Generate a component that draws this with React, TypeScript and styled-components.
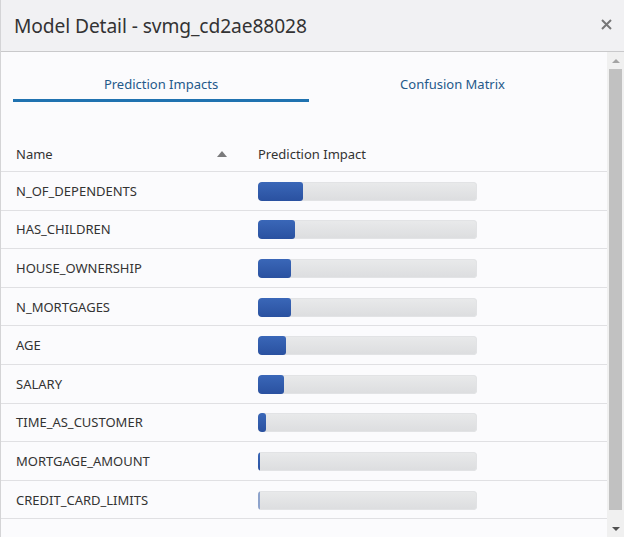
import styled, { createGlobalStyle } from "styled-components";

const GlobalStyle = createGlobalStyle`
  html, body {
    margin: 0;
    padding: 0;
    background: #ffffff;
  }
  * {
    box-sizing: border-box;
  }
`;

const impacts = [
  { name: "N_OF_DEPENDENTS", width: 45 },
  { name: "HAS_CHILDREN", width: 37 },
  { name: "HOUSE_OWNERSHIP", width: 33 },
  { name: "N_MORTGAGES", width: 33 },
  { name: "AGE", width: 28 },
  { name: "SALARY", width: 26 },
  { name: "TIME_AS_CUSTOMER", width: 8 },
  { name: "MORTGAGE_AMOUNT", width: 2 },
  { name: "CREDIT_CARD_LIMITS", width: 2, faint: true },
];

const Dialog = styled.div`
  width: 624px;
  height: 537px;
  display: flex;
  flex-direction: column;
  border-left: 1px solid #d4d4d6;
  font-family: "Noto Sans", "Open Sans", sans-serif;
  color: #333;
  overflow: hidden;
`;

const Header = styled.div`
  height: 52px;
  flex-shrink: 0;
  display: flex;
  align-items: center;
  justify-content: space-between;
  padding: 0 12px 0 13px;
  background: #f1f1f3;
  border-bottom: 1px solid #c9c9cb;
`;

const Title = styled.h1`
  margin: 0;
  margin-top: -1px;
  font-size: 19.2px;
  font-weight: 400;
  color: #333;
  letter-spacing: -0.1px;
`;

const CloseButton = styled.button`
  border: none;
  background: none;
  padding: 0;
  width: 12px;
  height: 12px;
  display: flex;
  align-items: center;
  justify-content: center;
  margin-top: -2px;
`;

const Body = styled.div`
  flex: 1;
  display: flex;
  min-height: 0;
`;

const Content = styled.div`
  flex: 1;
  background: #fbfbfd;
`;

const Tabs = styled.div`
  display: flex;
  margin: 0 11px 0 12px;
`;

const Tab = styled.div<{ $active?: boolean }>`
  flex: ${({ $active }) => ($active ? "0 0 296px" : "1")};
  text-align: center;
  padding: 22px 0 5px;
  line-height: 20px;
  font-size: 13px;
  color: #24598a;
  border-bottom: 3px solid ${({ $active }) => ($active ? "#1f72b0" : "transparent")};
`;

const Table = styled.div`
  margin-top: 33px;
`;

const HeadRow = styled.div`
  display: flex;
  align-items: center;
  height: 37px;
  padding-top: 1px;
  border-bottom: 1px solid #e0e0e3;
  font-size: 13px;
`;

const NameHead = styled.div`
  width: 257px;
  padding-left: 15px;
  padding-right: 30px;
  display: flex;
  align-items: center;
  justify-content: space-between;
`;

const SortArrow = styled.span`
  width: 0;
  height: 0;
  border-left: 5.5px solid transparent;
  border-right: 5.5px solid transparent;
  border-bottom: 6px solid #7a7a7c;
  margin-right: 1px;
`;

const Row = styled.div`
  display: flex;
  align-items: center;
  height: 38.6px;
  border-bottom: 1px solid #e0e0e3;
  font-size: 13px;
`;

const NameCell = styled.div`
  width: 257px;
  padding-left: 15px;
`;

const Track = styled.div`
  width: 219px;
  height: 19px;
  margin-top: 1px;
  border-radius: 4px;
  background: linear-gradient(#e9eaeb, #dcdddf);
  box-shadow: inset 0 0 0 1px #e2e3e5;
  overflow: hidden;
`;

const Fill = styled.div<{ $faint?: boolean }>`
  height: 100%;
  border-radius: 3px;
  background: ${({ $faint }) =>
    $faint ? "#8ea3cc" : "linear-gradient(#3a67b8, #2a51a0)"};
`;

const Scrollbar = styled.div`
  width: 17px;
  flex-shrink: 0;
  display: flex;
  flex-direction: column;
  background: #f0f0f0;
`;

const ArrowBox = styled.div`
  height: 17px;
  display: flex;
  align-items: center;
  justify-content: center;
`;

const UpArrow = styled.span`
  width: 0;
  height: 0;
  border-left: 4px solid transparent;
  border-right: 4px solid transparent;
  border-bottom: 4px solid #a3a3a3;
`;

const DownArrow = styled.span`
  width: 0;
  height: 0;
  border-left: 4px solid transparent;
  border-right: 4px solid transparent;
  border-top: 4px solid #505050;
`;

const ThumbArea = styled.div`
  flex: 1;
  padding: 0 2px;
`;

const Thumb = styled.div`
  height: 441px;
  background: #c1c1c1;
`;

export default function App() {
  return (
    <>
      <GlobalStyle />
      <Dialog>
        <Header>
          <Title>Model Detail - svmg_cd2ae88028</Title>
          <CloseButton aria-label="Close">
            <svg width="11" height="11" viewBox="0 0 11 11">
              <path d="M1 1L10 10M10 1L1 10" stroke="#777" strokeWidth="2" />
            </svg>
          </CloseButton>
        </Header>
        <Body>
          <Content>
            <Tabs>
              <Tab $active>Prediction Impacts</Tab>
              <Tab>Confusion Matrix</Tab>
            </Tabs>
            <Table>
              <HeadRow>
                <NameHead>
                  Name
                  <SortArrow />
                </NameHead>
                <div>Prediction Impact</div>
              </HeadRow>
              {impacts.map((item) => (
                <Row key={item.name}>
                  <NameCell>{item.name}</NameCell>
                  <Track>
                    <Fill $faint={item.faint} style={{ width: item.width }} />
                  </Track>
                </Row>
              ))}
            </Table>
          </Content>
          <Scrollbar>
            <ArrowBox>
              <UpArrow />
            </ArrowBox>
            <ThumbArea>
              <Thumb />
            </ThumbArea>
            <ArrowBox>
              <DownArrow />
            </ArrowBox>
          </Scrollbar>
        </Body>
      </Dialog>
    </>
  );
}
